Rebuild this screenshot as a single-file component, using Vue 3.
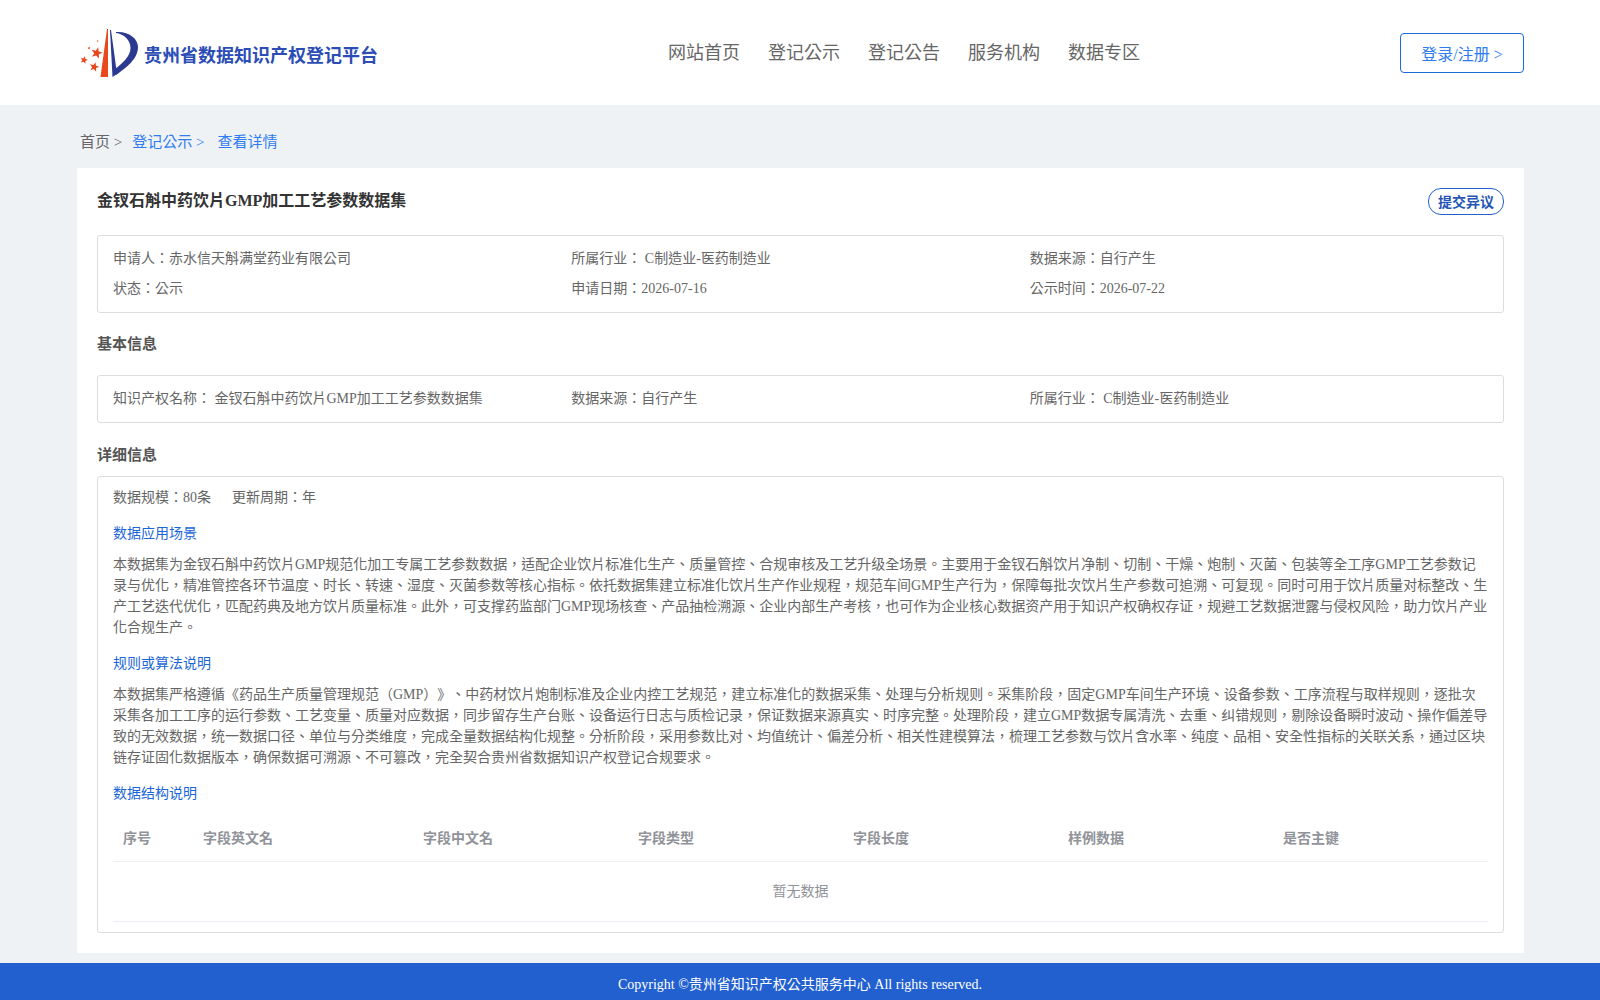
<template>
  <div class="page">
    <header class="top">
      <div class="logo">
        <svg class="logo-mark" width="58" height="52" viewBox="0 0 58 52">
          <path d="M27 1 L28 1 L28 49 L20.5 49 Z" fill="#e8481c" />
          <path d="M30 2 L31 2 L37 46 L32.5 49 Z" fill="#2b3a8f" />
          <path d="M36 4 C48 3 58 10 58 19 C58 31 46 40 36 47 L35 41 C43 35 50.5 28 50.5 20 C50.5 12 44 6 36 5 Z" fill="#2b3a8f" />
          <polygon v-for="s in stars" :key="s.x" :points="starPoints(s)" fill="#e8481c" />
        </svg>
        <span class="logo-text">贵州省数据知识产权登记平台</span>
      </div>
      <nav class="nav">
        <a v-for="item in navItems" :key="item">{{ item }}</a>
      </nav>
      <button class="login">登录/注册 &gt;</button>
    </header>

    <main class="main">
      <div class="crumb">
        <span class="crumb-home">首页 &gt;</span>
        <span class="crumb-link">登记公示 &gt;</span>
        <span class="crumb-cur">查看详情</span>
      </div>

      <section class="card">
        <div class="title-row">
          <h2>金钗石斛中药饮片GMP加工工艺参数数据集</h2>
          <button class="objection">提交异议</button>
        </div>

        <div class="box info-grid">
          <div>申请人：赤水信天斛满堂药业有限公司</div>
          <div>所属行业： C制造业-医药制造业</div>
          <div>数据来源：自行产生</div>
          <div>状态：公示</div>
          <div>申请日期：2026-07-16</div>
          <div>公示时间：2026-07-22</div>
        </div>

        <h3 class="sub-first">基本信息</h3>
        <div class="box info-grid">
          <div>知识产权名称： 金钗石斛中药饮片GMP加工工艺参数数据集</div>
          <div>数据来源：自行产生</div>
          <div>所属行业： C制造业-医药制造业</div>
        </div>

        <h3 class="sub-second">详细信息</h3>
        <div class="box detail">
          <div class="scale">
            <span>数据规模：80条</span>
            <span>更新周期：年</span>
          </div>

          <div class="label">数据应用场景</div>
          <p>本数据集为金钗石斛中药饮片GMP规范化加工专属工艺参数数据，适配企业饮片标准化生产、质量管控、合规审核及工艺升级全场景。主要用于金钗石斛饮片净制、切制、干燥、炮制、灭菌、包装等全工序GMP工艺参数记录与优化，精准管控各环节温度、时长、转速、湿度、灭菌参数等核心指标。依托数据集建立标准化饮片生产作业规程，规范车间GMP生产行为，保障每批次饮片生产参数可追溯、可复现。同时可用于饮片质量对标整改、生产工艺迭代优化，匹配药典及地方饮片质量标准。此外，可支撑药监部门GMP现场核查、产品抽检溯源、企业内部生产考核，也可作为企业核心数据资产用于知识产权确权存证，规避工艺数据泄露与侵权风险，助力饮片产业化合规生产。</p>

          <div class="label">规则或算法说明</div>
          <p>本数据集严格遵循《药品生产质量管理规范（GMP）》、中药材饮片炮制标准及企业内控工艺规范，建立标准化的数据采集、处理与分析规则。采集阶段，固定GMP车间生产环境、设备参数、工序流程与取样规则，逐批次采集各加工工序的运行参数、工艺变量、质量对应数据，同步留存生产台账、设备运行日志与质检记录，保证数据来源真实、时序完整。处理阶段，建立GMP数据专属清洗、去重、纠错规则，剔除设备瞬时波动、操作偏差导致的无效数据，统一数据口径、单位与分类维度，完成全量数据结构化规整。分析阶段，采用参数比对、均值统计、偏差分析、相关性建模算法，梳理工艺参数与饮片含水率、纯度、品相、安全性指标的关联关系，通过区块链存证固化数据版本，确保数据可溯源、不可篡改，完全契合贵州省数据知识产权登记合规要求。</p>

          <div class="label">数据结构说明</div>
          <div class="table">
            <div class="thead">
              <div v-for="col in columns" :key="col">{{ col }}</div>
            </div>
            <div class="empty">暂无数据</div>
          </div>
        </div>
      </section>
    </main>

    <footer class="foot">Copyright ©贵州省知识产权公共服务中心 All rights reserved.</footer>
  </div>
</template>

<script setup>
const navItems = ['网站首页', '登记公示', '登记公告', '服务机构', '数据专区']
const columns = ['序号', '字段英文名', '字段中文名', '字段类型', '字段长度', '样例数据', '是否主键']

// logo stars, in svg units
const stars = [
  { x: 16.7, y: 25, r: 6 },
  { x: 4, y: 32, r: 4 },
  { x: 14.3, y: 39, r: 5 },
  { x: 9, y: 20, r: 1.6 },
  { x: 17.7, y: 13, r: 1.1 }
]

const starPoints = ({ x, y, r }) => {
  const pts = []
  for (let i = 0; i < 10; i++) {
    const rad = i % 2 ? r * 0.42 : r
    const a = -Math.PI / 2 + (i * Math.PI) / 5 + 0.25
    pts.push(`${(x + rad * Math.cos(a)).toFixed(2)},${(y + rad * Math.sin(a)).toFixed(2)}`)
  }
  return pts.join(' ')
}
</script>

<style>
body {
  background: #eff2f5;
}
</style>

<style scoped>
.page {
  font-family: "Liberation Serif", "Noto Sans CJK TC", serif;
  text-spacing-trim: space-all;
  color: #666;
  font-size: 14px;
  min-height: 1000px;
  background: #eff2f5;
}

.top {
  height: 105px;
  background: #fff;
  display: flex;
  align-items: center;
  padding: 0 76px 0 80px;
}

.logo {
  width: 588px;
  display: flex;
  align-items: center;
  padding-top: 3px;
}

.logo-mark {
  margin-right: 6px;
}

.logo-text {
  font-size: 18px;
  font-weight: bold;
  color: #2b4db5;
}

.nav {
  display: flex;
  gap: 28px;
  font-size: 18px;
  color: #666;
  margin-bottom: 3px;
}

.login {
  margin-left: auto;
  width: 124px;
  height: 40px;
  background: #fff;
  border: 1px solid #1a6ae0;
  border-radius: 4px;
  color: #2f7cf0;
  font: inherit;
  font-size: 16px;
}

.main {
  padding: 0 76px 10px 77px;
}

.crumb {
  height: 63px;
  padding: 8px 0 0 3px;
  box-sizing: border-box;
  display: flex;
  align-items: center;
  font-size: 15px;
}

.crumb-link {
  color: #2f7cf0;
  margin-left: 10px;
}

.crumb-cur {
  color: #2f7cf0;
  margin-left: 13px;
}

.card {
  background: #fff;
  padding: 20px;
}

.title-row {
  display: flex;
  justify-content: space-between;
  align-items: flex-start;
  height: 47px;
}

.title-row h2 {
  margin: 0;
  font-size: 16px;
  line-height: 25px;
  color: #333;
}

.objection {
  width: 76px;
  height: 27px;
  padding: 0 0 2px;
  background: #fff;
  border: 1px solid #2260cf;
  border-radius: 13px;
  color: #2455b5;
  font: inherit;
  font-size: 14px;
  font-weight: bold;
}

.box {
  border: 1px solid #ddd;
  border-radius: 3px;
  padding: 0 15px;
}

.info-grid {
  display: grid;
  grid-template-columns: repeat(3, 1fr);
  line-height: 30px;
  padding-top: 8px;
  padding-bottom: 8px;
}

h3 {
  margin: 0;
  font-size: 15px;
  line-height: 22px;
  color: #555;
}

.sub-first {
  margin: 20px 0;
}

.sub-second {
  margin: 21px 0 10px;
}

.detail {
  padding-top: 10px;
  padding-bottom: 10px;
}

.scale {
  display: flex;
  gap: 21px;
  line-height: 21px;
}

.label {
  color: #1a66d8;
  line-height: 21px;
  margin-top: 15px;
}

p {
  margin: 10px 0 0;
  line-height: 21px;
}

.table {
  margin-top: 10px;
  color: #909399;
}

.thead {
  display: grid;
  grid-template-columns: 80px 220px repeat(5, 215px);
  height: 48px;
  padding-bottom: 2px;
  box-sizing: border-box;
  align-items: center;
  font-weight: bold;
  border-bottom: 1px solid #ebeef5;
}

.thead div {
  padding-left: 10px;
}

.empty {
  height: 59px;
  line-height: 59px;
  text-align: center;
  border-bottom: 1px solid #ebeef5;
}

.foot {
  height: 37px;
  line-height: 43px;
  background: #2260cf;
  color: #fff;
  text-align: center;
  font-size: 14px;
}
</style>
